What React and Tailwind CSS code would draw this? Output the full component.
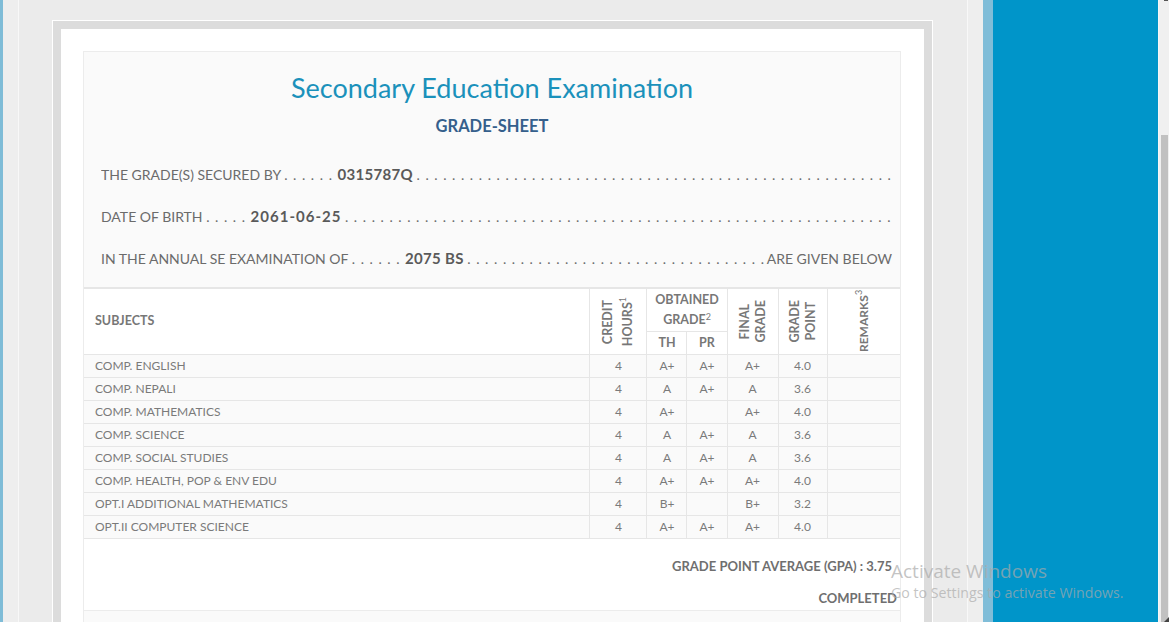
import React from 'react';

const rows = [
  ['COMP. ENGLISH', '4', 'A+', 'A+', 'A+', '4.0'],
  ['COMP. NEPALI', '4', 'A', 'A+', 'A', '3.6'],
  ['COMP. MATHEMATICS', '4', 'A+', '', 'A+', '4.0'],
  ['COMP. SCIENCE', '4', 'A', 'A+', 'A', '3.6'],
  ['COMP. SOCIAL STUDIES', '4', 'A', 'A+', 'A', '3.6'],
  ['COMP. HEALTH, POP & ENV EDU', '4', 'A+', 'A+', 'A+', '4.0'],
  ['OPT.I ADDITIONAL MATHEMATICS', '4', 'B+', '', 'B+', '3.2'],
  ['OPT.II COMPUTER SCIENCE', '4', 'A+', 'A+', 'A+', '4.0'],
];

const dots = '. '.repeat(120);

function Dots({ children }) {
  return <span className="tracking-[1px]">{children}</span>;
}

function VerticalHead({ lines, sup, gap = 'leading-[16px]' }) {
  return (
    <div className="flex justify-center">
      <div className={`rotate-180 text-center [writing-mode:vertical-rl] ${gap}`}>
        {lines.map((l, i) => (
          <span key={l} className="block">
            {l}
            {i === lines.length - 1 && sup ? (
              <span className="relative left-[5px] text-[9px] font-normal">{sup}</span>
            ) : null}
          </span>
        ))}
      </div>
    </div>
  );
}

function GradeTable() {
  const th = 'border border-[#e6e6e6] p-0 font-bold text-[12.5px] text-[#777]';
  return (
    <table className="w-full table-fixed border-collapse">
      <colgroup>
        <col />
        <col className="w-[57px]" />
        <col className="w-[40px]" />
        <col className="w-[40px]" />
        <col className="w-[51px]" />
        <col className="w-[49px]" />
        <col className="w-[73px]" />
      </colgroup>
      <thead className="bg-white">
        <tr className="h-[43px]">
          <th rowSpan={2} className={`${th} border-l-0 pl-[11px] text-left text-[11.5px]`}>SUBJECTS</th>
          <th rowSpan={2} className={th}>
            <VerticalHead lines={['CREDIT', 'HOURS']} sup="1" gap="leading-[20px]" />
          </th>
          <th colSpan={2} className={`${th} leading-[20px]`}>
            OBTAINED<br />GRADE<sup className="text-[9px] font-normal">2</sup>
          </th>
          <th rowSpan={2} className={th}><VerticalHead lines={['FINAL', 'GRADE']} /></th>
          <th rowSpan={2} className={th}><VerticalHead lines={['GRADE', 'POINT']} /></th>
          <th rowSpan={2} className={`${th} border-r-0 text-[12px]`}>
            <VerticalHead lines={['REMARKS']} sup="3" />
          </th>
        </tr>
        <tr className="h-[23px]">
          <th className={th}>TH</th>
          <th className={th}>PR</th>
        </tr>
      </thead>
      <tbody className="bg-[#fafafa] text-[12px] text-[#7a7a7a]">
        {rows.map((r) => (
          <tr key={r[0]} className="h-[23px]">
            <td className="border border-l-0 border-[#e6e6e6] p-0 pl-[11px]">{r[0]}</td>
            {r.slice(1).map((c, i) => (
              <td key={i} className="border border-[#e6e6e6] p-0 text-center">{c}</td>
            ))}
            <td className="border border-r-0 border-[#e6e6e6] p-0" />
          </tr>
        ))}
      </tbody>
    </table>
  );
}

function GradeSheet() {
  const val = 'text-[15px] font-bold leading-none tracking-[0.3px] text-[#5a5a5a]';
  return (
    <div className="border border-[#ececec] bg-[#fafafa]">
      <div className="pt-[18px] text-center">
        <h1 className="text-[27px] leading-[36px] text-[#1b91bb]">Secondary Education Examination</h1>
        <h2 className="mt-[8px] text-[16.5px] font-bold leading-[24px] text-[#355f8c]">GRADE-SHEET</h2>
      </div>

      <div className="mt-[16px] pl-[17px] pr-[8px] text-[14px] leading-[42px] text-[#6b6b6b]">
        <div className="h-[42px] overflow-hidden whitespace-nowrap">
          THE GRADE(S) SECURED BY <Dots>. . . . . . </Dots>
          <b className={val}>0315787Q</b> <Dots>{dots}</Dots>
        </div>
        <div className="h-[42px] overflow-hidden whitespace-nowrap">
          DATE OF BIRTH <Dots>. . . . . </Dots>
          <b className={`${val} tracking-[1px]`}>2061-06-25</b> <Dots>{dots}</Dots>
        </div>
        <div className="flex h-[42px] whitespace-nowrap">
          <span>
            IN THE ANNUAL SE EXAMINATION OF <Dots>. . . . . . </Dots>
            <b className={val}>2075 BS</b>&nbsp;
          </span>
          <span className="flex-1 overflow-hidden"><Dots>{dots}</Dots></span>
          <span>&nbsp;ARE GIVEN BELOW</span>
        </div>
      </div>

      <div className="mt-[7px] border-t border-[#e6e6e6]">
        <GradeTable />
      </div>

      <div className="bg-white pb-[4px] text-right text-[13px] font-bold text-[#6f6f6f]">
        <div className="pr-[8px] pt-[19px] leading-[16px]">GRADE POINT AVERAGE (GPA) : 3.75</div>
        <div className="pr-[3px] pt-[16px] leading-[16px]">COMPLETED</div>
      </div>
      <div className="h-[60px] border-t border-[#ececec] bg-[#fafafa]" />
    </div>
  );
}

export default function App() {
  return (
    <div className="relative flex h-[622px] w-[1169px] overflow-hidden bg-[#eeeeee] font-['Lato',sans-serif]">
      <div className="w-[3px] shrink-0 bg-[#7fbcd7]" />

      <main className="flex w-[980px] shrink-0 px-[15px]">
        <div className="flex-1 border-x border-[#f8f8f8] bg-[#ebebeb] pl-[33px] pt-[20px]">
          <div className="w-[881px] border-x border-t border-white">
            <div className="border-8 border-b-0 border-[#dcdcdc] bg-white pl-[22px] pr-[23px] pt-[22px]">
              <GradeSheet />
            </div>
          </div>
        </div>
      </main>

      <aside className="w-[175px] shrink-0 border-l-[10px] border-[#80bdd8] bg-[#0095c9]" />

      <div className="relative w-[11px] shrink-0 border-l border-[#f6f6f6] bg-[#f0f0f0] pl-[2px] pt-[135px]">
        <div className="h-full w-[7px] bg-[#c1c1c1]" />
        <svg className="absolute right-0 top-0" width="6" height="3" viewBox="0 0 6 3">
          <rect x="1" y="0" width="4" height="1" fill="#555" />
        </svg>
        <svg className="absolute bottom-0 right-0" width="5" height="5" viewBox="0 0 5 5">
          <polygon points="0,5 5,0 5,5" fill="#444" />
        </svg>
      </div>

      <div className="pointer-events-none absolute left-[891px] top-[558px] font-['Open_Sans',sans-serif] text-[rgba(170,170,170,0.7)]">
        <div className="text-[19px] leading-[26px]">Activate Windows</div>
        <div className="text-[14.2px] leading-[18px]">Go to Settings to activate Windows.</div>
      </div>
    </div>
  );
}
